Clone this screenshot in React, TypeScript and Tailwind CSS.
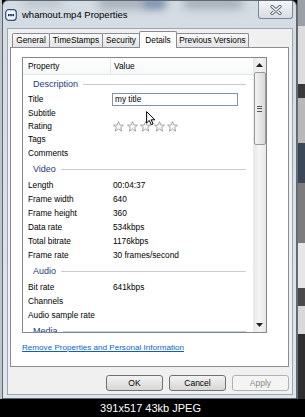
import React from "react";

const F = { fontFamily: '"Liberation Sans", Arial, sans-serif' };

function Star() {
  return (
    <svg width="11" height="11" viewBox="0 0 11 11">
      <polygon
        points="5.5,0.6 6.9,4 10.5,4.2 7.7,6.5 8.7,10.2 5.5,8.1 2.3,10.2 3.3,6.5 0.5,4.2 4.1,4"
        fill="#f7f7f7"
        stroke="#9c9c9c"
        strokeWidth="0.9"
        strokeLinejoin="round"
      />
    </svg>
  );
}

function Row({ label, value }: { label: string; value?: React.ReactNode }) {
  return (
    <div className="flex h-[14px] items-center text-[8.3px] leading-[14px] text-black">
      <div className="w-[90px] shrink-0 pl-[5px] whitespace-nowrap">{label}</div>
      <div className="whitespace-nowrap">{value}</div>
    </div>
  );
}

function Group({ label }: { label: string }) {
  return (
    <div className="flex h-[18px] items-center">
      <span className="pl-[10px] text-[9px] leading-[18px] text-[#1e3a7b]">{label}</span>
      <div className="ml-[5px] mr-[7px] h-px flex-1 bg-[#c6ccd6]" />
    </div>
  );
}

function Tab({ label, w, active }: { label: string; w: string; active?: boolean }) {
  if (active)
    return (
      <div
        className={`${w} relative z-10 -mb-px -ml-px flex h-[17px] items-start justify-center rounded-t-[2px] border border-b-0 border-[#898c95] bg-white pt-[2px] text-[8.3px] text-black`}
      >
        {label}
      </div>
    );
  return (
    <div
      className={`${w} -ml-px flex h-[14px] items-center justify-center rounded-t-[2px] border border-b-0 border-[#898c95] bg-gradient-to-b from-[#fbfbfb] to-[#e3e3e3] text-[8.3px] text-black first:ml-0`}
    >
      {label}
    </div>
  );
}

export default function App() {
  return (
    <div className="flex h-[417px] w-[305px] flex-col overflow-hidden bg-black" style={F}>
      <div className="flex h-[399px]">
        <div className="w-[2px] bg-[#bfc4c9]" />
        {/* window */}
        <div className="flex w-[295px] flex-col rounded-t-[6px] border border-[#5e6873] bg-gradient-to-b from-[#d3dbe3] to-[#dfe6ed]">
          {/* title bar */}
          <div className="relative flex h-[27px] shrink-0 items-start overflow-hidden">
            <div className="pointer-events-none absolute left-[95px] top-[-4px] h-[12px] w-[70px] rounded-full bg-[#6f7882]/45 blur-[4px]" />
            <div className="pointer-events-none absolute left-[140px] top-[-3px] h-[11px] w-[22px] rounded-full bg-[#5b7bb0]/50 blur-[3px]" />
            <div className="pointer-events-none absolute left-[180px] top-[-4px] h-[12px] w-[60px] rounded-full bg-[#6f7882]/45 blur-[4px]" />
            <div className="pointer-events-none absolute left-[20px] top-[-4px] h-[10px] w-[40px] rounded-full bg-[#9aa2ab]/40 blur-[4px]" />
            <div className="relative ml-[2px] mt-[7px] flex items-center">
              <svg width="12" height="12" viewBox="0 0 12 12">
                <rect x="0.7" y="0.7" width="10.6" height="10.6" rx="3" fill="#f4f6fa" stroke="#2f4f85" strokeWidth="1.2" />
                <rect x="3" y="5" width="1.6" height="2.2" fill="#1c2d4d" />
                <rect x="5.2" y="5" width="1.6" height="2.2" fill="#1c2d4d" />
                <rect x="7.4" y="5" width="1.6" height="2.2" fill="#1c2d4d" />
              </svg>
              <span className="ml-[5px] text-[9.5px] leading-[13px] text-black">whamout.mp4 Properties</span>
            </div>
            <div className="relative ml-auto mr-[3px] flex h-[18px] w-[35px] items-center justify-center rounded-b-[3px] border border-t-0 border-[#7a8796] bg-gradient-to-b from-[#f4f6f8] to-[#d7dde4]">
              <svg width="12" height="10" viewBox="0 0 12 10">
                <path d="M2 1.5 L10 8.5 M10 1.5 L2 8.5" stroke="#5b6370" strokeWidth="3.2" strokeLinecap="round" />
                <path d="M2 1.5 L10 8.5 M10 1.5 L2 8.5" stroke="#f7f7f7" strokeWidth="1.6" strokeLinecap="round" />
              </svg>
            </div>
          </div>
          {/* body */}
          <div className="mb-[3px] ml-[4px] mr-[3px] flex h-[367px] flex-col border border-[#9aa6b2] bg-[#f0f0f0] pl-[2px] pr-[3px] pt-[2px]">
            {/* tabs */}
            <div className="ml-[2px] flex h-[16px] items-end">
              <Tab label="General" w="w-[38px]" />
              <Tab label="TimeStamps" w="w-[54px]" />
              <Tab label="Security" w="w-[38px]" />
              <Tab label="Details" w="w-[38px]" active />
              <Tab label="Previous Versions" w="w-[73px]" />
            </div>
            {/* panel */}
            <div className="flex h-[320px] flex-col border border-[#898c95] bg-white pl-[11px] pt-[9px]">
              <div className="flex h-[276px] w-[245px] border border-[#828790] bg-white">
                <div className="relative flex w-[230px] flex-col overflow-hidden">
                  {/* header */}
                  <div className="flex h-[17px] shrink-0 items-center border-b border-[#e3e6ea] bg-gradient-to-b from-white to-[#f7f8f9] text-[8.3px] text-black">
                    <div className="flex h-full w-[88px] items-center border-r border-[#e3e6ea] pl-[5px]">Property</div>
                    <div className="pl-[3px]">Value</div>
                  </div>
                  <Group label="Description" />
                  <div className="flex h-[14px] items-center text-[8.3px] text-black">
                    <div className="w-[89px] shrink-0 pl-[5px]">Title</div>
                    <div className="flex h-[13px] w-[126px] items-center border border-[#7f93ae] bg-white pl-[2px] leading-none">my title</div>
                  </div>
                  <Row label="Subtitle" />
                  <div className="flex h-[14px] items-center text-[8.3px] text-black">
                    <div className="w-[89px] shrink-0 pl-[5px]">Rating</div>
                    <div className="ml-[1px] flex gap-[2.5px]">
                      <Star />
                      <Star />
                      <Star />
                      <Star />
                      <Star />
                    </div>
                  </div>
                  <Row label="Tags" />
                  <Row label="Comments" />
                  <Group label="Video" />
                  <Row label="Length" value="00:04:37" />
                  <Row label="Frame width" value="640" />
                  <Row label="Frame height" value="360" />
                  <Row label="Data rate" value="534kbps" />
                  <Row label="Total bitrate" value="1176kbps" />
                  <Row label="Frame rate" value="30 frames/second" />
                  <Group label="Audio" />
                  <Row label="Bit rate" value="641kbps" />
                  <Row label="Channels" />
                  <Row label="Audio sample rate" />
                  <Group label="Media" />
                  {/* mouse cursor */}
                  <svg className="absolute left-[123px] top-[53px]" width="10" height="15" viewBox="0 0 10 15">
                    <path d="M0.6 0.6 L0.6 12 L3.3 9.4 L5.3 13.8 L7.1 13 L5.2 8.8 L8.9 8.8 Z" fill="#ffffff" stroke="#000000" strokeWidth="1" strokeLinejoin="round" />
                  </svg>
                </div>
                {/* scrollbar */}
                <div className="flex w-[13px] flex-col items-center bg-gradient-to-r from-[#e8e8e8] via-[#f4f4f4] to-[#e8e8e8]">
                  <div className="flex h-[14px] w-full items-center justify-center">
                    <svg width="7" height="4" viewBox="0 0 7 4">
                      <polygon points="0,4 3.5,0 7,4" fill="#222" />
                    </svg>
                  </div>
                  <div className="flex h-[73px] w-[12px] flex-col items-center justify-center gap-[1.5px] rounded-[2px] border border-[#9a9a9a] bg-gradient-to-r from-[#f3f3f3] to-[#d9d9d9]">
                    <div className="h-px w-[5px] bg-[#555]" />
                    <div className="h-px w-[5px] bg-[#555]" />
                    <div className="h-px w-[5px] bg-[#555]" />
                  </div>
                  <div className="flex-1" />
                  <div className="flex h-[14px] w-full items-center justify-center">
                    <svg width="7" height="4" viewBox="0 0 7 4">
                      <polygon points="0,0 3.5,4 7,0" fill="#222" />
                    </svg>
                  </div>
                </div>
              </div>
              <div className="mt-[10px] text-[8.1px] leading-[10px] text-[#0b5fbf] underline">
                Remove Properties and Personal Information
              </div>
            </div>
            {/* buttons */}
            <div className="mt-[8px] flex h-[16px] justify-end gap-[6px]">
              <div className="flex w-[57px] items-center justify-center rounded-[3px] border border-[#707070] bg-gradient-to-b from-[#f3f3f3] to-[#d6d6d6] text-[8.5px] text-black">OK</div>
              <div className="flex w-[57px] items-center justify-center rounded-[3px] border border-[#707070] bg-gradient-to-b from-[#f3f3f3] to-[#d6d6d6] text-[8.5px] text-black">Cancel</div>
              <div className="flex w-[57px] items-center justify-center rounded-[3px] border border-[#adb2b5] bg-[#f4f4f4] text-[8.5px] text-[#8a8a8a]">Apply</div>
            </div>
          </div>
        </div>
        {/* background strip on the right */}
        <div className="flex w-[8px] flex-col border-l border-[#6b6b6b]">
          <div className="h-[26px] bg-[#9aa0a6]" />
          <div className="h-[58px] bg-[#dcdcdc]" />
          <div className="h-[14px] bg-[#3a3a3a]" />
          <div className="h-[45px] bg-[#b8b8b8]" />
          <div className="h-[40px] bg-[#3b4656]" />
          <div className="h-[60px] bg-[#7c7c7c]" />
          <div className="h-[45px] bg-[#e6e6e6]" />
          <div className="h-[18px] bg-[#4a4a4a]" />
          <div className="h-[28px] bg-[#d8d8d8]" />
          <div className="flex-1 bg-[#2e2e2e]" />
        </div>
      </div>
      <div className="flex h-[18px] items-center justify-center pr-[4px] text-[11px] text-white">
        391x517 43kb JPEG
      </div>
    </div>
  );
}
